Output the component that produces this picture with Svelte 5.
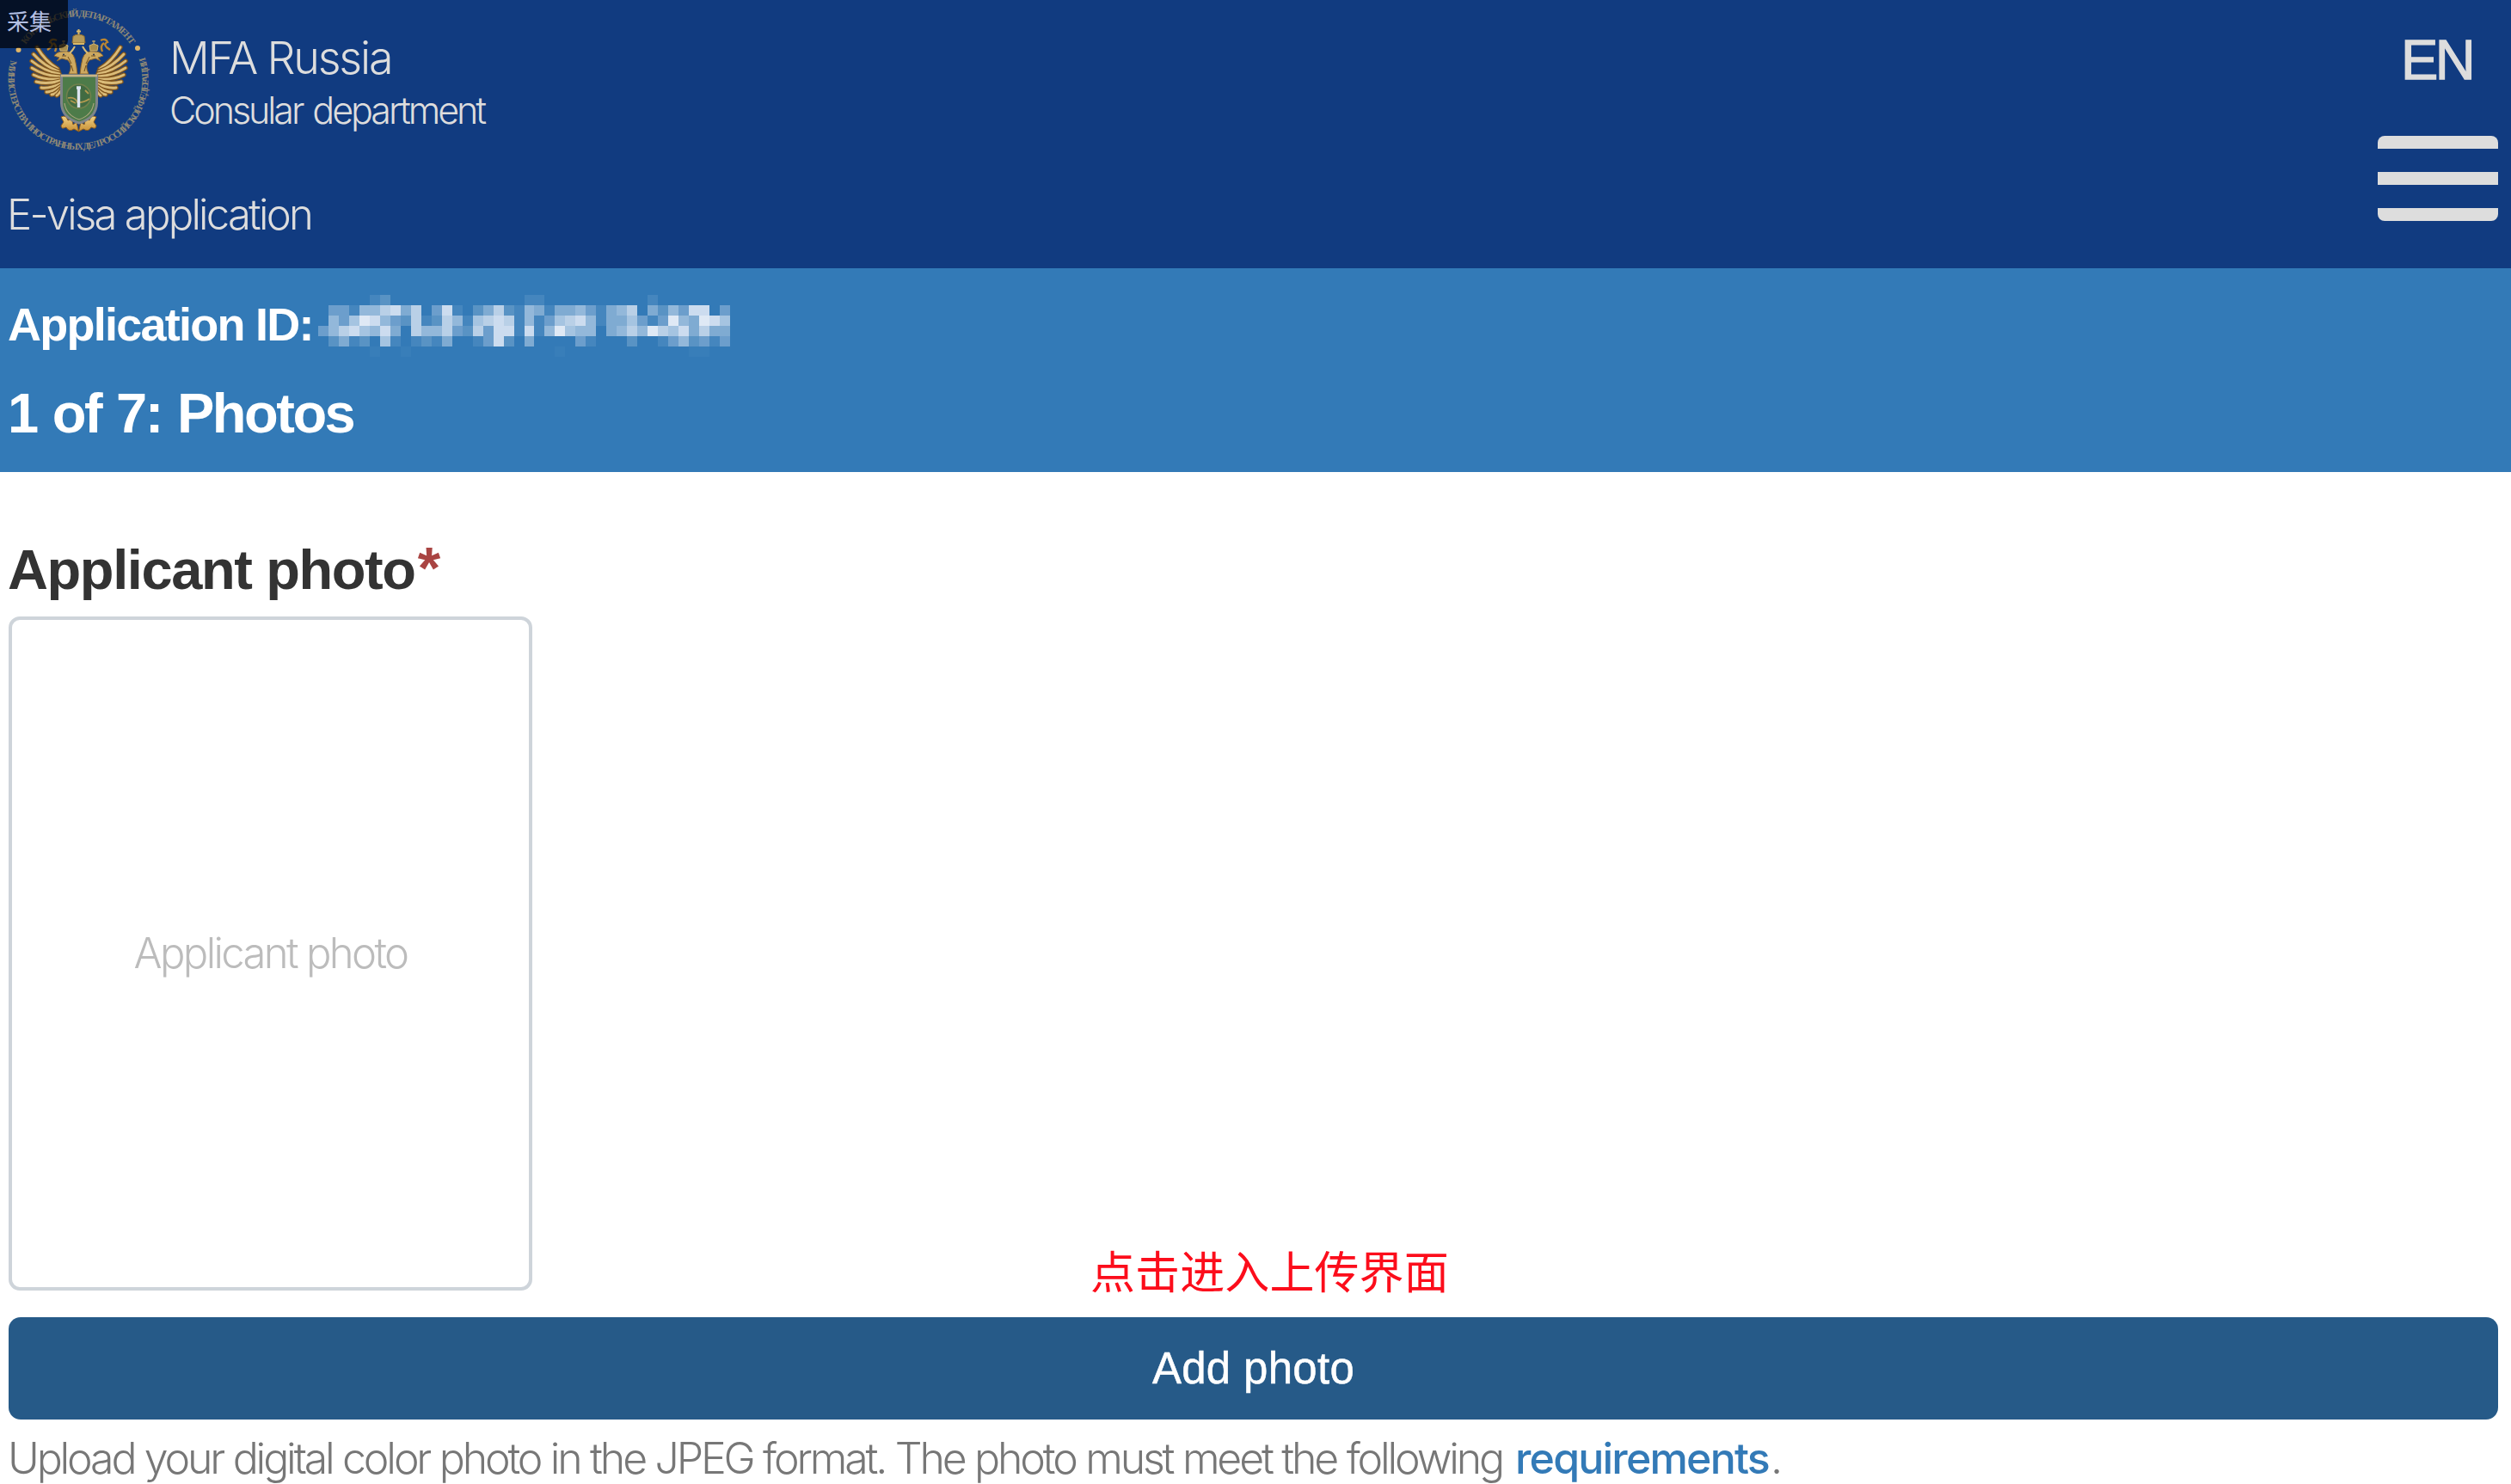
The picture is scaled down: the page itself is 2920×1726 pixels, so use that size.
<script>
  // Brightness (0-9) of every tile that covers the hidden application number
  const tiles = [
    '0000012000000000000011000000000010000000',
    '0331557847038102472154144531457042538803',
    '0536985327127516787151367851446313954986',
    '3578658407557327388181596550457597684744',
    '0241206101214001382040000310002001352313',
    '0000010010000000000000010000000000001100',
  ];

  const feathers = [
    [67, 80, 43, 55], [68, 83, 39, 63], [69, 86, 37, 71], [69, 89, 37, 79],
    [69, 92, 39, 87], [70, 94, 42, 95], [71, 97, 48, 102], [71, 100, 54, 107],
    [72, 102, 60, 110], [72, 104, 66, 111],
  ];
</script>

<div class="page">
  <div class="badge">采集</div>
  <header>
    <div class="brand">
      <svg class="emblem" viewBox="0 0 184 184" width="184" height="184">
        <defs>
          <path id="arc-top" d="M 30 52 A 73 73 0 0 1 153 54" />
          <path id="arc-bottom" d="M 12.7 70 A 81.5 81.5 0 1 0 167.4 64" />
          <linearGradient id="gold" x1="0" y1="0" x2="0" y2="1">
            <stop offset="0" stop-color="#f0d184" />
            <stop offset="1" stop-color="#c78f35" />
          </linearGradient>
        </defs>
        <g class="ring">
          <text><textPath href="#arc-top" textLength="144">КОНСУЛЬСКИЙ ДЕПАРТАМЕНТ</textPath></text>
          <text><textPath href="#arc-bottom" textLength="305">МИНИСТЕРСТВА ИНОСТРАННЫХ ДЕЛ РОССИЙСКОЙ ФЕДЕРАЦИИ</textPath></text>
        </g>
        <circle cx="21.5" cy="58" r="3" fill="#e0b567" />
        <circle cx="160" cy="56" r="3" fill="#e0b567" />
        {#each [false, true] as right}
          <g transform={right ? 'translate(183 0) scale(-1 1)' : undefined}>
            {#each feathers as [a, b, c, d]}
              <path d="M{a} {b} Q{(a + c) / 2 - 2} {(b + d) / 2 + 4} {c} {d}" stroke="#80551d" stroke-width="5.4" stroke-linecap="round" fill="none" />
              <path d="M{a} {b} Q{(a + c) / 2 - 2} {(b + d) / 2 + 4} {c} {d}" stroke="#dabb78" stroke-width="2.9" stroke-linecap="round" fill="none" />
            {/each}
            <path d="M87 86 H80 Q85 76 79 70 L72 68 L66 71 L69 67 L63 65 Q66 60 73 60 Q84 58 87 68 Q89 76 90 86Z" fill="#cda960" stroke="#8c642a" stroke-width="1" />
            <path d="M72 65h5M79 66l4 8M83 76l2 7" stroke="#70501f" stroke-width="1" />
            <circle cx="74" cy="63.5" r="1" fill="#222f50" />
            <path d="M70 59 L69 53 L74 51 L79 53 L78 59Z M74 51v-4M72 48h4" fill="#a78d4c" stroke="#d2b46c" stroke-width="1" />
            <path d="M66 47 Q60 44 58 49 Q63 51 59 55 L55 58 M62 50 Q67 53 64 60" stroke="#ba8532" stroke-width="2.4" fill="none" />
            <path d="M81 62 Q85 58 87 54" stroke="#d7bc77" stroke-width="2" fill="none" />
            <path d="M71 136 Q77 133 79 140 Q84 137 85 145 L89 142 L91.5 153 L86 150 Q80 154 77 148 Q71 151 71 146 L74 142Z" fill="url(#gold)" stroke="#8d5b1b" stroke-width="1" />
          </g>
        {/each}
        <path d="M84 50 L85 42 Q88 40 91.5 40 Q95 40 98 42 L99 50Z" fill="#b69b59" stroke="#8a6a30" stroke-width="1" />
        <path d="M91.5 40V34M89 36.5h5M85 51h13" stroke="#d9b968" stroke-width="2" />
        <path d="M71.5 88 H112.5 V120 Q112 137 92 143 Q72 137 71.5 120Z" fill="#4d7b49" stroke="#7f8588" stroke-width="3" />
        <path d="M71 88 H113" stroke="#c9b586" stroke-width="2.5" />
        <path d="M75 120 Q77 134 92 139 Q107 134 109 120" fill="none" stroke="#a9a47c" stroke-width="1.2" />
        <circle cx="91.5" cy="112" r="14" fill="#416b42" stroke="#70814c" stroke-width="1.6" />
        <path d="M79 114 Q87 112 90 119 Q96 120 104 115 M82 117l6 3M99 105l4 4" stroke="#b19a4f" stroke-width="1.8" fill="none" />
        <path d="M89 102h5M91.5 102v23" stroke="#dce5f0" stroke-width="3.4" />
      </svg>
      <div class="names">
        <div class="name">MFA Russia</div>
        <div class="dept">Consular department</div>
      </div>
    </div>
    <div class="app">E-visa application</div>
    <nav>
      <div class="lang">EN</div>
      <div class="burger"><i></i><i></i><i></i></div>
    </nav>
  </header>

  <section class="status">
    <div class="idrow">
      <span class="id">Application ID:</span>
      <svg class="mosaic" width="479" height="72" viewBox="0 0 40 6" preserveAspectRatio="none" shape-rendering="crispEdges">
        {#each tiles as row, y}
          {#each row.split('') as v, x}
            {#if v !== '0'}
              <rect {x} {y} width="1" height="1" fill="#eff3fb" fill-opacity={y === 5 ? 0.03 : Number(v) / 9.8} />
            {/if}
          {/each}
        {/each}
      </svg>
    </div>
    <div class="step">1 of 7: Photos</div>
  </section>

  <main>
    <h1><span class="title">Applicant photo</span><span class="star">*</span></h1>
    <div class="preview"><span>Applicant photo</span></div>
    <div class="note"><span>点击进入上传界面</span></div>
    <button><span>Add photo</span></button>
    <p><span class="hint">Upload your digital color photo in the JPEG format. The photo must meet the following</span> <a href="#req">requirements</a><span class="dot">.</span></p>
  </main>
</div>

<style>
  :global(body) { margin: 0; background: #fff; }
  .page {
    position: relative;
    width: 2920px;
    height: 1726px;
    overflow: hidden;
    background: #fff;
    font-family: "Liberation Sans", "Noto Sans CJK SC", sans-serif;
    white-space: nowrap;
  }
  .page * { box-sizing: border-box; }
  .badge {
    position: absolute;
    left: 0;
    top: 0;
    z-index: 2;
    width: 79px;
    height: 56px;
    padding-left: 8px;
    border-radius: 0 0 9px 0;
    background: rgba(0, 0, 0, 0.7);
    color: #b3bfe2;
    font: 26px/48px "Noto Sans CJK SC", sans-serif;
  }
  header {
    display: grid;
    grid-template-columns: 1fr 155px;
    grid-template-rows: 215px 97px;
    height: 312px;
    background: #113b80;
    color: #ddd;
  }
  .brand { display: flex; }
  .emblem { flex: none; }
  .ring {
    font: bold 11px "Liberation Serif", serif;
    fill: #8f8976;
  }
  .names { padding: 33px 0 0 13px; font-family: Inter, sans-serif; font-weight: 300; }
  .name { font-size: 52px; line-height: 70px; letter-spacing: -2.2px; }
  .dept { font-size: 43px; line-height: 50px; letter-spacing: -3.05px; word-spacing: 3px; }
  .app {
    grid-row: 2;
    padding: 1px 0 0 8px;
    font: 300 49px/68px Inter, sans-serif;
    letter-spacing: -2.75px;
  }
  nav { grid-column: 2; grid-row: 1 / 3; }
  .lang {
    padding: 32px 0 0 27px;
    font-size: 65px;
    line-height: 75px;
    letter-spacing: -3.5px;
    -webkit-text-stroke: 1.3px #ddd;
  }
  .burger {
    display: flex;
    flex-direction: column;
    gap: 27px;
    width: 140px;
    margin-top: 51px;
    border-radius: 8px;
    overflow: hidden;
  }
  .burger i { height: 15px; background: #ddd; }
  .status {
    height: 237px;
    padding: 31px 0 0 9px;
    background: #337ab7;
    color: #fff;
    font-weight: bold;
  }
  .idrow { display: flex; }
  .id { width: 361px; font-size: 54px; line-height: 69px; letter-spacing: -1.75px; }
  .mosaic { flex: none; }
  .step {
    margin-top: 28px;
    font-size: 65px;
    line-height: 75px;
    letter-spacing: -2.5px;
    word-spacing: 2.5px;
  }
  main { padding-left: 10px; }
  h1 {
    display: flex;
    height: 95px;
    margin: 73px 0 0 -1px;
    color: #333;
    font-size: 65px;
    line-height: 81px;
  }
  .title { letter-spacing: -1.4px; }
  .star { margin-left: 3px; color: #a94442; font-size: 68px; line-height: 76px; }
  .preview {
    display: flex;
    align-items: center;
    justify-content: center;
    width: 609px;
    height: 784px;
    border: 4px solid #ced4da;
    border-radius: 13px;
    color: #bcbcbc;
    font: 300 49px/60px Inter, sans-serif;
  }
  .preview span { letter-spacing: -2.65px; }
  .note {
    height: 81px;
    margin: -50px 0 0 1258px;
    color: #fc0d1b;
    font: 52px/52px "Noto Sans CJK SC", sans-serif;
    letter-spacing: 0.1px;
  }
  button {
    display: block;
    width: 2895px;
    height: 119px;
    padding: 0;
    border: 0;
    border-radius: 14px;
    background: #265a88;
    color: #fff;
    font: 51px/120px "Liberation Sans", sans-serif;
    letter-spacing: 0.3px;
    -webkit-text-stroke: 0.5px #fff;
  }
  p {
    display: flex;
    margin: 14px 0 0;
    color: #777;
    font: 300 50px/62px Inter, sans-serif;
  }
  .hint { width: 1753px; margin-left: -1px; letter-spacing: -3.15px; word-spacing: 0.6px; }
  a { width: 297px; color: #337ab7; font-weight: 500; text-decoration: none; letter-spacing: -1.8px; }
</style>
